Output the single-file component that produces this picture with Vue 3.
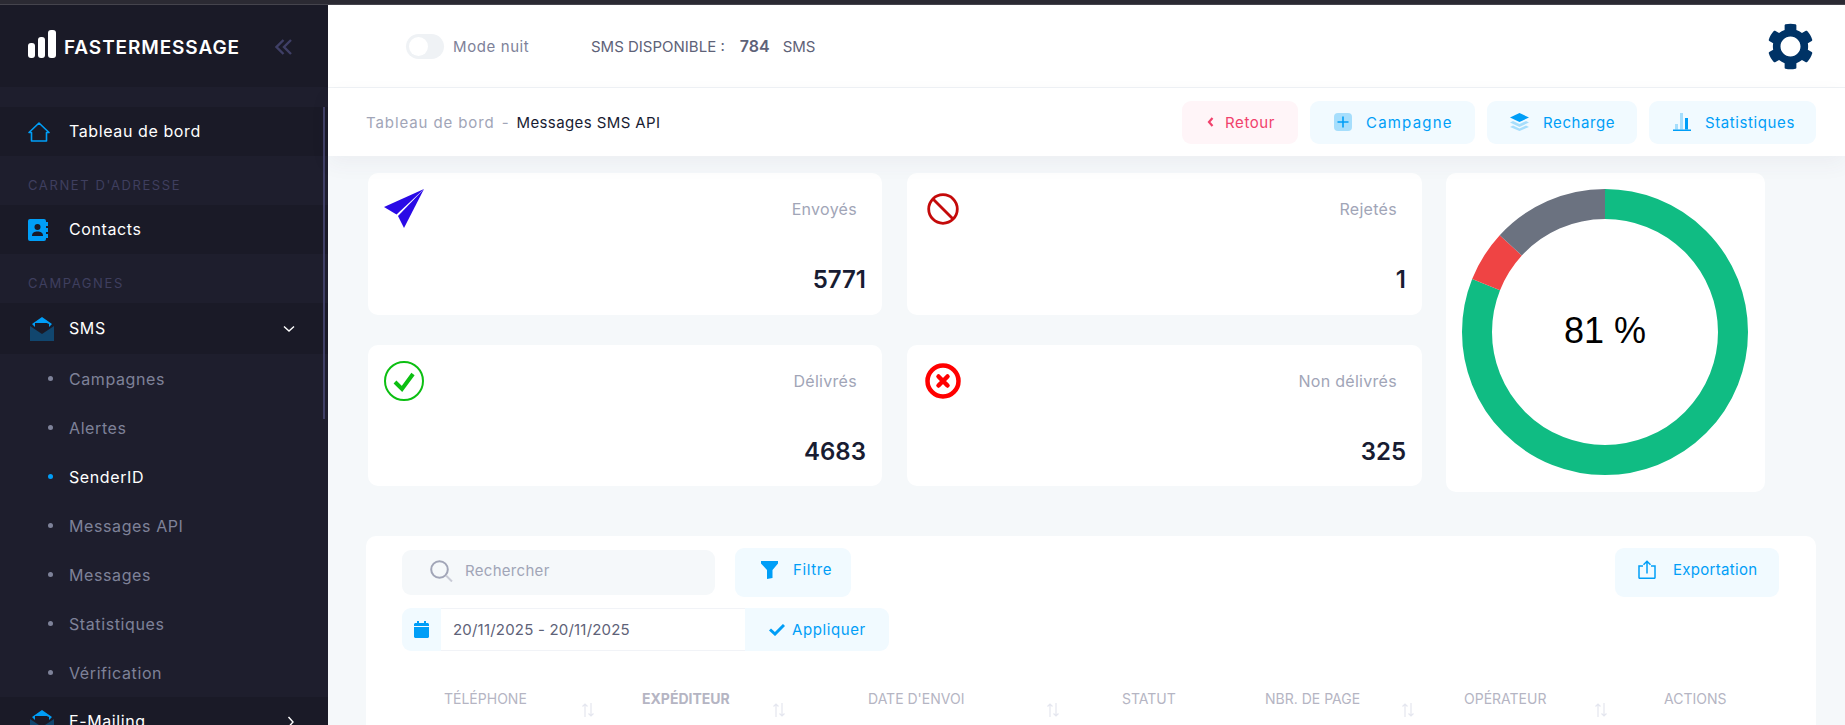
<script setup>
// Sidebar content
const subItems = ['Campagnes', 'Alertes', 'SenderID', 'Messages API', 'Messages', 'Statistiques', 'Vérification']
const activeSub = 'SenderID'

// Stat cards
const stats = [
  { label: 'Envoyés', value: '5771', icon: 'sent' },
  { label: 'Rejetés', value: '1', icon: 'rejected' },
  { label: 'Délivrés', value: '4683', icon: 'delivered' },
  { label: 'Non délivrés', value: '325', icon: 'failed' }
]

// Donut chart
const radius = 128
const circumference = 2 * Math.PI * radius
const segments = [
  { color: '#10bc83', share: 0.81 },
  { color: '#ef4444', share: 0.058 },
  { color: '#6b7280', share: 0.132 }
]
let offset = 0
const arcs = segments.map((s) => {
  const arc = {
    color: s.color,
    dash: `${s.share * circumference} ${circumference}`,
    shift: -offset * circumference
  }
  offset += s.share
  return arc
})

// Table head, arrow is the distance from the text start to the sort arrows
const columns = [
  { title: 'TÉLÉPHONE', arrow: 137 },
  { title: 'EXPÉDITEUR', arrow: 130, bold: true },
  { title: "DATE D'ENVOI", arrow: 178 },
  { title: 'STATUT' },
  { title: 'NBR. DE PAGE', arrow: 136 },
  { title: 'OPÉRATEUR', arrow: 130 },
  { title: 'ACTIONS' }
]
</script>

<template>
  <div class="page">
    <div class="browser-strip"></div>
    <div class="layout">
      <aside class="sidebar">
        <div class="brand">
          <svg class="brand-bars" width="28" height="28" viewBox="0 0 28 28">
            <rect x="0" y="13" width="7" height="15" rx="3" fill="#fff" />
            <rect x="10" y="7" width="7" height="21" rx="3" fill="#fff" />
            <rect x="20" y="0" width="8" height="28" rx="3" fill="#fff" />
          </svg>
          <span class="brand-name">FASTERMESSAGE</span>
          <svg class="collapse" width="17" height="16" viewBox="0 0 17 16" fill="none" stroke="#3f3f66" stroke-width="2.4">
            <path d="M8.5 1 1.5 8l7 7M16 1 9 8l7 7" />
          </svg>
        </div>

        <nav class="nav">
          <div class="scroll-thumb"></div>
          <a class="nav-row">
            <span class="nav-icon">
              <svg width="22" height="20" viewBox="0 0 22 20" fill="none" stroke="#009ef7" stroke-width="1.6" stroke-linejoin="round">
                <path d="M1 10.5 11 1l10 9.500h-2.500V19h-15v-8.500z" />
              </svg>
            </span>
            <span class="nav-label">Tableau de bord</span>
          </a>
          <div class="nav-section">CARNET D'ADRESSE</div>
          <a class="nav-row">
            <span class="nav-icon">
              <svg width="20" height="22" viewBox="0 0 20 22">
                <rect x="0" y="0" width="18" height="22" rx="2" fill="#009ef7" />
                <rect x="18" y="3" width="2" height="4" fill="#009ef7" />
                <rect x="18" y="9" width="2" height="4" fill="#009ef7" />
                <rect x="18" y="15" width="2" height="4" fill="#009ef7" />
                <circle cx="9.500" cy="8" r="3" fill="#1a1a27" />
                <path d="M4 17c0-3.500 2.500-4.500 5.500-4.500S15 13.500 15 17z" fill="#1a1a27" />
              </svg>
            </span>
            <span class="nav-label">Contacts</span>
          </a>
          <div class="nav-section">CAMPAGNES</div>
          <a class="nav-row nav-row-tall">
            <span class="nav-icon">
              <svg class="mail" width="24" height="24" viewBox="0 0 24 24">
                <path d="M0 9v15h24V9l-12 8z" fill="#11466e" />
                <path d="M12 0 2 7l3 3V6h14v4l3-3z" fill="#009ef7" />
                <path d="M5 10V6h14v4l-7 5z" fill="#1a1a27" />
                <path d="M5 6h14v1L12 4z" fill="#009ef7" />
              </svg>
            </span>
            <span class="nav-label">SMS</span>
            <svg class="caret" width="12" height="8" viewBox="0 0 12 8" fill="none" stroke="#fff" stroke-width="1.400">
              <path d="m1 1.500 5 4.500 5-4.500" />
            </svg>
          </a>
          <a v-for="item in subItems" :key="item" class="sub-row" :class="{ active: item === activeSub }">
            <span class="dot"></span>
            <span>{{ item }}</span>
          </a>
          <a class="nav-row">
            <span class="nav-icon">
              <svg class="mail" width="24" height="24" viewBox="0 0 24 24">
                <path d="M0 9v15h24V9l-12 8z" fill="#11466e" />
                <path d="M12 0 2 7l3 3V6h14v4l3-3z" fill="#009ef7" />
                <path d="M5 10V6h14v4l-7 5z" fill="#1a1a27" />
                <path d="M5 6h14v1L12 4z" fill="#009ef7" />
              </svg>
            </span>
            <span class="nav-label">E-Mailing</span>
            <svg class="caret" width="8" height="12" viewBox="0 0 8 12" fill="none" stroke="#fff" stroke-width="1.400">
              <path d="m1.500 1 4.500 5-4.500 5" />
            </svg>
          </a>
        </nav>
      </aside>

      <main class="main">
        <header class="topbar">
          <span class="toggle"><span class="knob"></span></span>
          <span class="night">Mode nuit</span>
          <span class="credit">SMS DISPONIBLE :</span>
          <strong class="credit-count">784</strong>
          <span class="credit">SMS</span>
          <svg class="gear" width="47" height="47" viewBox="0 0 512 512">
            <path fill="#003366" d="M487.400 315.700l-42.600-24.600c4.300-23.200 4.300-47 0-70.200l42.600-24.600c4.900-2.800 7.100-8.600 5.500-14-11.100-35.600-30-67.800-54.700-94.600-3.800-4.100-10-5.100-14.800-2.300L380.800 110c-17.900-15.400-38.500-27.300-60.800-35.100V25.800c0-5.600-3.900-10.500-9.400-11.700-36.700-8.200-74.300-7.800-109.200 0-5.500 1.200-9.400 6.100-9.400 11.700V75c-22.200 7.900-42.800 19.800-60.800 35.100L88.700 85.500c-4.900-2.800-11-1.900-14.800 2.300-24.700 26.700-43.600 58.900-54.700 94.600-1.700 5.400.6 11.200 5.500 14L67.300 221c-4.300 23.200-4.300 47 0 70.200l-42.600 24.600c-4.900 2.800-7.100 8.600-5.500 14 11.100 35.600 30 67.800 54.700 94.600 3.800 4.100 10 5.100 14.800 2.300l42.600-24.600c17.900 15.400 38.500 27.300 60.800 35.100v49.200c0 5.600 3.900 10.500 9.400 11.700 36.700 8.200 74.300 7.800 109.200 0 5.500-1.200 9.400-6.100 9.400-11.700v-49.200c22.200-7.900 42.800-19.800 60.800-35.100l42.600 24.600c4.900 2.800 11 1.900 14.800-2.300 24.700-26.700 43.600-58.900 54.700-94.600 1.500-5.500-.7-11.300-5.600-14.100zM256 365c-60.200 0-109-48.800-109-109s48.800-109 109-109 109 48.800 109 109-48.800 109-109 109z" />
          </svg>
        </header>

        <div class="subheader">
          <div class="crumbs">
            <span class="crumb-muted">Tableau de bord</span>
            <span class="crumb-muted crumb-sep">-</span>
            <span class="crumb-current">Messages SMS API</span>
          </div>
          <div class="actions">
            <button class="btn btn-danger btn-back">
              <svg width="7" height="10" viewBox="0 0 7 10" fill="none" stroke="#f1416c" stroke-width="2.200">
                <path d="M5.500 1 2 5l3.500 4" />
              </svg>
              Retour
            </button>
            <button class="btn btn-campagne">
              <svg width="18" height="18" viewBox="0 0 18 18">
                <rect width="18" height="18" rx="4" fill="#a6defc" />
                <path d="M9 3.500v11M3.500 9h11" stroke="#009ef7" stroke-width="1.600" />
              </svg>
              Campagne
            </button>
            <button class="btn btn-recharge">
              <svg width="19" height="18" viewBox="0 0 19 18">
                <path d="M0 14l3-1.500 6.500 3 6.500-3 3 1.500-9.500 4z" fill="#a6defc" />
                <path d="M0 9.500l3-1.500 6.500 3 6.500-3 3 1.500-9.500 4.500z" fill="#a6defc" />
                <path d="M9.500 0 19 4.500 9.500 9 0 4.500z" fill="#009ef7" />
              </svg>
              Recharge
            </button>
            <button class="btn btn-stats">
              <svg width="18" height="18" viewBox="0 0 18 18">
                <rect x="2" y="11" width="3" height="5.500" fill="#a6defc" />
                <rect x="7" y="0" width="3" height="16.500" fill="#a6defc" />
                <rect x="12" y="5" width="3" height="11.500" fill="#009ef7" />
                <rect x="0" y="16.500" width="18" height="1.500" fill="#009ef7" />
              </svg>
              Statistiques
            </button>
          </div>
        </div>

        <section class="content">
          <div class="overview">
            <div class="stat-grid">
              <div v-for="stat in stats" :key="stat.label" class="card stat">
                <div class="stat-head">
                  <svg width="40" height="44" viewBox="0 0 40 44">
                    <template v-if="stat.icon === 'sent'">
                      <path d="M40 2 0 20l12.500 7.500z" fill="#2a0ae6" />
                      <path d="M40 2 14 29l6 12z" fill="#2a0ae6" />
                    </template>
                    <template v-else-if="stat.icon === 'rejected'">
                      <circle cx="20" cy="22" r="14.300" fill="none" stroke="#c40a0a" stroke-width="2.800" />
                      <path d="M10 12l20 20" stroke="#c40a0a" stroke-width="2.800" />
                    </template>
                    <template v-else-if="stat.icon === 'delivered'">
                      <circle cx="20" cy="22" r="19" fill="none" stroke="#0cbf12" stroke-width="2" />
                      <path d="m11 23 7 7 11-15" fill="none" stroke="#0cbf12" stroke-width="4" />
                    </template>
                    <template v-else>
                      <circle cx="20" cy="22" r="15.500" fill="none" stroke="#ff0000" stroke-width="4.500" />
                      <path d="m15.500 17.500 9 9m0-9-9 9" fill="none" stroke="#ff0000" stroke-width="4.500" stroke-linecap="round" />
                    </template>
                  </svg>
                  <span class="stat-label">{{ stat.label }}</span>
                </div>
                <div class="stat-value">{{ stat.value }}</div>
              </div>
            </div>

            <div class="card donut">
              <svg width="319" height="319" viewBox="0 0 319 319">
                <circle
                  v-for="arc in arcs"
                  :key="arc.color"
                  cx="159"
                  cy="159"
                  :r="radius"
                  fill="none"
                  :stroke="arc.color"
                  stroke-width="30"
                  :stroke-dasharray="arc.dash"
                  :stroke-dashoffset="arc.shift"
                  transform="rotate(-90 159 159)"
                />
                <text x="159" y="170" text-anchor="middle" class="donut-text">81 %</text>
              </svg>
            </div>
          </div>

          <div class="card table-card">
            <div class="toolbar">
              <div class="search">
                <svg width="23" height="22" viewBox="0 0 23 22" fill="none" stroke="#a1a5b7">
                  <circle cx="9.500" cy="9.500" r="8.300" stroke-width="2" />
                  <path d="m16 15.500 6 6" stroke-width="2" stroke="#c9cbd6" />
                </svg>
                <span>Rechercher</span>
              </div>
              <button class="btn btn-filter">
                <svg width="17" height="18" viewBox="0 0 17 18">
                  <path d="M0 0h17v2.500l-5.500 6.500v8L6 18V9L0 2.500z" fill="#009ef7" />
                </svg>
                Filtre
              </button>
              <button class="btn btn-export">
                <svg width="18" height="19" viewBox="0 0 18 19" fill="none" stroke="#009ef7" stroke-width="1.500">
                  <path d="M5 6H1v11.500c0 .5.300.8.800.8h14.400c.5 0 .8-.3.800-.8V6h-4" />
                  <path d="M9 13.500V1.500M5.500 4.700 9 1.200l3.500 3.500" />
                </svg>
                Exportation
              </button>
            </div>

            <div class="date-group">
              <span class="date-addon">
                <svg width="15" height="17" viewBox="0 0 15 17">
                  <path d="M3 0h2v2h5V0h2v2h1.500c.8 0 1.500.7 1.500 1.500V5H0V3.500C0 2.700.7 2 1.500 2H3z" fill="#009ef7" />
                  <path d="M0 6h15v9.500c0 .8-.7 1.500-1.500 1.500h-12C.7 17 0 16.300 0 15.500z" fill="#009ef7" />
                </svg>
              </span>
              <span class="date-value">20/11/2025 - 20/11/2025</span>
              <span class="date-apply">
                <svg width="16" height="12" viewBox="0 0 16 12" fill="none" stroke="#009ef7" stroke-width="3">
                  <path d="m1 5.500 5 4.500 9-9" />
                </svg>
                Appliquer
              </span>
            </div>

            <div class="table-head">
              <div v-for="col in columns" :key="col.title" class="th" :class="{ 'th-bold': col.bold }">
                {{ col.title }}
                <svg v-if="col.arrow" class="sort" :style="{ left: col.arrow + 'px' }" width="14" height="14" viewBox="0 0 14 14" fill="none" stroke="#e4e6ef" stroke-width="1.200">
                  <path d="M4 14V1M1.500 3.500 4 1l2.500 2.500M10 0v13M7.500 10.500 10 13l2.500-2.500" />
                </svg>
              </div>
            </div>
          </div>
        </section>
      </main>
    </div>
  </div>
</template>

<style>
html, body {
  margin: 0;
  height: 100%;
  overflow: hidden;
}
</style>

<style scoped>
.page {
  height: 725px;
  overflow: hidden;
  display: flex;
  flex-direction: column;
  font-family: Inter, "Noto Sans", sans-serif;
  background: #f5f8fa;
}

.browser-strip {
  height: 5px;
  flex-shrink: 0;
  background: #2b2a33;
  border-bottom: 1px solid #45444d;
  box-sizing: border-box;
}

.layout {
  display: flex;
  flex: 1;
  min-height: 0;
}

/* Sidebar */
.sidebar {
  width: 328px;
  flex-shrink: 0;
  background: #1e1e2d;
  overflow: hidden;
}

.brand {
  height: 82px;
  box-sizing: border-box;
  background: #1a1a27;
  display: flex;
  align-items: center;
  padding-left: 28px;
}

.brand-bars {
  margin-bottom: 5px;
}

.brand-name {
  margin-left: 8px;
  width: 211px;
  color: #fff;
  font-size: 19px;
  font-weight: 600;
  letter-spacing: 0.9px;
  line-height: 1;
  padding-top: 3px;
}

.collapse {
  margin-top: 2px;
}

.nav {
  position: relative;
  padding-top: 20px;
}

.scroll-thumb {
  position: absolute;
  right: 3px;
  top: 20px;
  width: 2px;
  height: 312px;
  background: #3f3f66;
}

.nav-row {
  height: 49px;
  display: flex;
  align-items: center;
  background: #1a1a27;
  color: #fff;
  font-size: 16px;
  letter-spacing: 0.6px;
  padding: 0 33px 0 28px;
}

.nav-row-tall {
  height: 51px;
}

.nav-label {
  margin-bottom: 2px;
}

.nav-icon {
  width: 41px;
  display: flex;
  flex-shrink: 0;
}

.mail {
  margin-left: 2px;
}

.caret {
  margin-left: auto;
}

.nav-section {
  height: 49px;
  box-sizing: border-box;
  padding: 21px 0 0 28px;
  color: #3f3f5f;
  font-size: 13px;
  line-height: 16px;
  letter-spacing: 1.6px;
}

.sub-row {
  height: 49px;
  display: flex;
  align-items: center;
  color: #7e8299;
  font-size: 16px;
  letter-spacing: 0.6px;
  padding-left: 48px;
}

.sub-row.active {
  color: #fff;
}

.dot {
  width: 5px;
  height: 5px;
  border-radius: 50%;
  background: #7e8299;
  margin-right: 16px;
}

.sub-row.active .dot {
  background: #009ef7;
}

/* Top bar */
.main {
  flex: 1;
  min-width: 0;
  display: flex;
  flex-direction: column;
}

.topbar {
  height: 83px;
  flex-shrink: 0;
  box-sizing: border-box;
  background: #fff;
  border-bottom: 1px solid #eff2f5;
  display: flex;
  align-items: center;
  padding: 0 31px 0 78px;
  font-size: 15px;
}

.toggle {
  width: 38px;
  height: 25px;
  border-radius: 13px;
  background: #eff2f5;
  display: flex;
  align-items: center;
  padding-left: 3px;
  box-sizing: border-box;
}

.knob {
  width: 19px;
  height: 19px;
  border-radius: 50%;
  background: #fff;
}

.night {
  margin-left: 9px;
  width: 138px;
  color: #7e8299;
  letter-spacing: 0.6px;
}

.credit {
  color: #5e6278;
}

.credit-count {
  margin: 0 13px 0 15px;
  color: #5e6278;
  font-size: 16px;
  font-weight: 600;
}

.gear {
  margin-left: auto;
}

.subheader {
  height: 68px;
  flex-shrink: 0;
  box-sizing: border-box;
  background: #fff;
  display: flex;
  align-items: center;
  justify-content: space-between;
  padding: 0 29px 0 38px;
  box-shadow: 0 8px 20px rgba(82, 63, 105, 0.05);
  position: relative;
  z-index: 1;
}

.crumbs {
  font-size: 15px;
}

.crumb-muted {
  color: #a1a5b7;
  letter-spacing: 0.9px;
}

.crumb-sep {
  margin: 0 7px;
}

.crumb-current {
  color: #181c32;
  letter-spacing: 0.4px;
}

.actions {
  display: flex;
  gap: 12px;
}

.btn {
  height: 43px;
  box-sizing: border-box;
  border: 0;
  border-radius: 9px;
  background: #f1faff;
  color: #009ef7;
  font-family: inherit;
  font-size: 15px;
  letter-spacing: 0.6px;
  display: flex;
  align-items: center;
  gap: 14px;
  padding: 0 0 0 24px;
}

.btn-danger {
  background: #fff5f8;
  color: #f1416c;
  gap: 11px;
  padding-left: 25px;
}

.btn-back {
  width: 116px;
}

.btn-campagne {
  width: 165px;
  letter-spacing: 1.2px;
}

.btn-recharge {
  width: 150px;
  padding-left: 23px;
}

.btn-stats {
  width: 167px;
}

/* Stats */
.content {
  padding: 17px 29px 0 38px;
}

.overview {
  display: flex;
  gap: 24px;
  margin-left: 2px;
}

.stat-grid {
  width: 1054px;
  display: grid;
  grid-template-columns: 514px 515px;
  grid-template-rows: 142px 141px;
  column-gap: 25px;
  row-gap: 30px;
}

.card {
  background: #fff;
  border-radius: 10px;
}

.stat {
  padding: 14px 16px 0 16px;
}

.stat-head {
  display: flex;
  align-items: center;
  justify-content: space-between;
  padding-right: 9px;
}

.stat-label {
  color: #a1a5b7;
  font-size: 16px;
  letter-spacing: 0.3px;
}

.stat-value {
  margin-top: 34px;
  text-align: right;
  color: #181c32;
  font-size: 24px;
  line-height: 30px;
  font-weight: 600;
}

.donut {
  width: 319px;
  height: 319px;
}

.donut-text {
  font-family: "Liberation Sans", Arial, sans-serif;
  font-size: 36px;
  fill: #000;
}

/* Table */
.table-card {
  margin-top: 44px;
  height: 260px;
  padding: 12px 37px 0 36px;
}

.toolbar {
  display: flex;
  align-items: center;
}

.search {
  width: 313px;
  height: 45px;
  box-sizing: border-box;
  background: #f5f8fa;
  border-radius: 9px;
  display: flex;
  align-items: center;
  gap: 12px;
  padding: 0 0 4px 28px;
  color: #a1a5b7;
  font-size: 15px;
  letter-spacing: 0.3px;
}

.btn-filter {
  width: 116px;
  height: 49px;
  margin-left: 20px;
  gap: 15px;
  padding: 0 0 6px 26px;
}

.btn-export {
  width: 164px;
  height: 49px;
  margin-left: auto;
  gap: 17px;
  padding: 0 0 6px 23px;
  letter-spacing: 0.3px;
}

.date-group {
  margin-top: 11px;
  width: 487px;
  height: 43px;
  display: flex;
  border-radius: 9px;
  overflow: hidden;
  font-size: 15px;
}

.date-addon {
  width: 39px;
  background: #f1faff;
  display: flex;
  align-items: center;
  justify-content: center;
}

.date-value {
  width: 304px;
  box-sizing: border-box;
  padding-left: 12px;
  border: 1px solid #f1f3f7;
  border-width: 1px 0;
  color: #5e6278;
  display: flex;
  align-items: center;
  letter-spacing: 0.2px;
}

.date-apply {
  flex: 1;
  background: #f1faff;
  color: #009ef7;
  display: flex;
  align-items: center;
  gap: 7px;
  padding-left: 24px;
  letter-spacing: 0.6px;
}

.table-head {
  margin: 38px -37px 0 -36px;
  padding-left: 78px;
  display: grid;
  grid-template-columns: 198px 226px 254px 143px 199px 200px 1fr;
  font-size: 14px;
  line-height: 20px;
  color: #b5b5c3;
}

.th {
  position: relative;
}

.th-bold {
  font-weight: 700;
}

.sort {
  position: absolute;
  top: 14px;
}
</style>
